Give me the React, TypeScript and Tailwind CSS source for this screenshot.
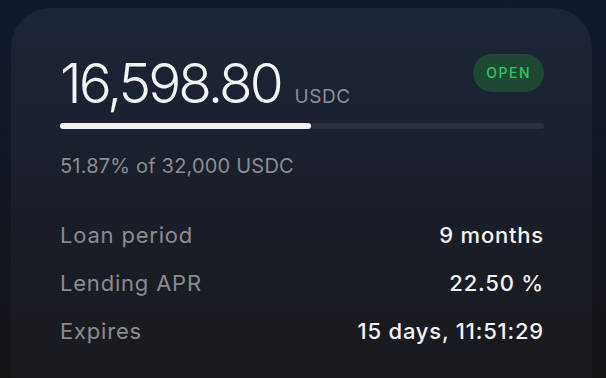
import React from 'react';

const rows = [
  { label: 'Loan period', value: '9 months' },
  { label: 'Lending APR', value: '22.50 %' },
  { label: 'Expires', value: '15 days, 11:51:29' },
];

export default function App() {
  const funded = 16598.8;
  const target = 32000;
  const pct = (funded / target) * 100;

  return (
    <div className="h-[378px] w-[606px] overflow-hidden bg-gradient-to-b from-[#101a2d] to-[#141417] pt-2 pl-[11px] pr-[14px] font-['Inter',sans-serif]">
      <div className="h-[400px] rounded-t-[40px] bg-gradient-to-b from-[#1c2537] via-[#1a1e29] to-[#19191b] pl-[49px] pr-[48px] pt-[48px]">
        <div className="flex items-start justify-between">
          <div className="flex items-baseline gap-[14px]">
            <span className="text-[55px] font-light leading-none tracking-[-3px] text-[#f4f4f5]">16,598.80</span>
            <span className="text-[19px] tracking-[0.5px] text-[#8b8e96]">USDC</span>
          </div>
          <span className="mt-[-2px] rounded-full bg-[#1f4834] px-[13px] py-[12px] text-[14px] font-medium leading-[14px] tracking-[1.5px] text-[#25c963]">
            OPEN
          </span>
        </div>
        <div className="mt-[11px] h-[6px] w-full rounded-full bg-[#2c2f3b]">
          <div className="h-full rounded-full bg-[#f2f2f2]" style={{ width: `${pct}%` }} />
        </div>
        <p className="mt-[25px] text-[20px] leading-[24px] tracking-[0.2px] text-[#8b8d92]">51.87% of 32,000 USDC</p>
        <div className="mt-[43px] flex flex-col gap-[19px]">
          {rows.map(r => (
            <div key={r.label} className="flex items-center justify-between text-[22px] leading-[29px] tracking-[0.8px]">
              <span className="text-[#8a8b8f]">{r.label}</span>
              <span className="font-medium text-[#f4f4f5]">{r.value}</span>
            </div>
          ))}
        </div>
      </div>
    </div>
  );
}
